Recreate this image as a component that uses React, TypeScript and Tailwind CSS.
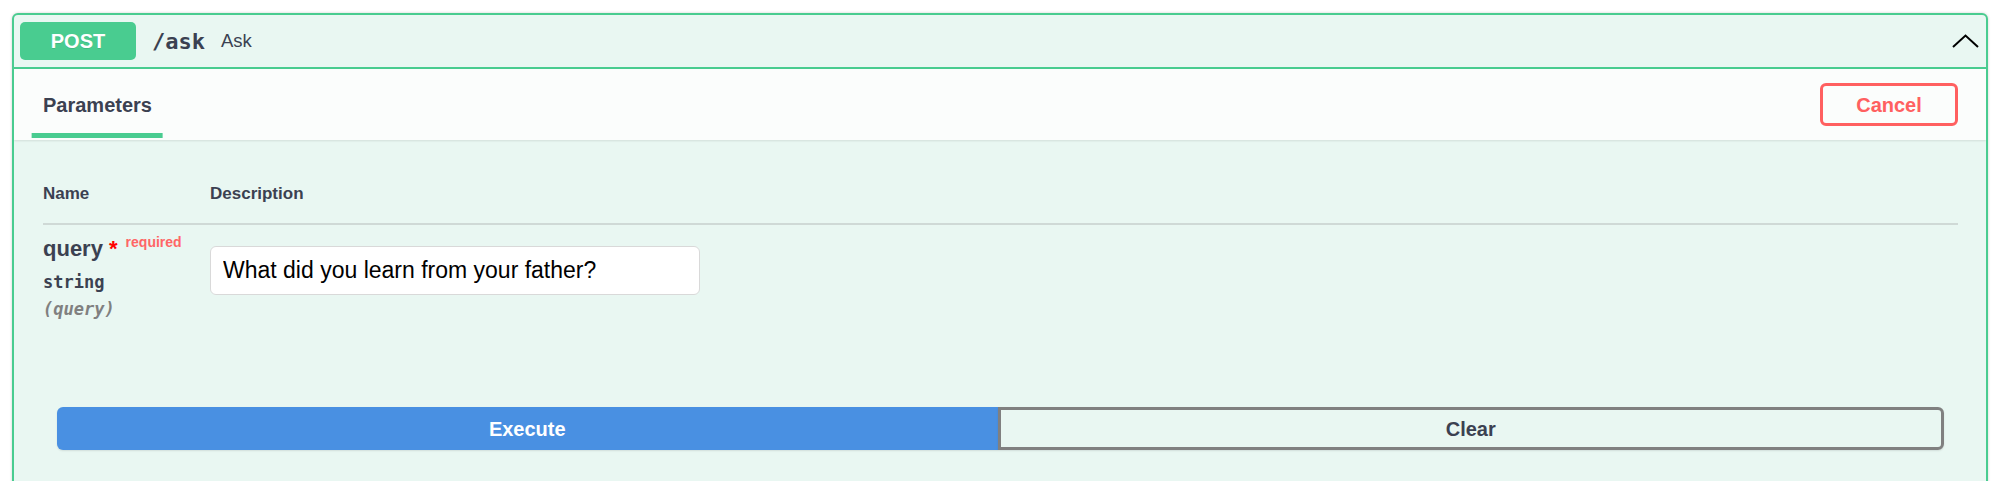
import React from "react";

const App: React.FC = () => {
    return (
        <div className="min-h-[481px] bg-white px-[12px] pt-[13px] font-['Liberation_Sans',Arial,sans-serif] text-[#3b4151]">
            <div className="overflow-hidden rounded-[6px] border-2 border-[#49cc90] bg-[#e9f7f2] shadow-[0_0_3px_rgba(0,0,0,0.19)]">
                {/* summary */}
                <div className="flex h-[54px] items-center border-b-2 border-[#49cc90] pl-[6px] pr-[7px]">
                    <span className="flex h-[38px] w-[116px] items-center justify-center rounded-[5px] bg-[#49cc90] text-[20px] font-bold text-white [text-shadow:0_1px_0_rgba(0,0,0,0.1)]">
                        POST
                    </span>
                    <span className="ml-[16px] font-['DejaVu_Sans_Mono',monospace] text-[22px] font-bold">/ask</span>
                    <span className="ml-[16px] text-[18.5px]">Ask</span>
                    <svg className="ml-auto" width="27" height="14" viewBox="0 0 27 14">
                        <polyline points="1,13 13.5,1.5 26,13" fill="none" stroke="#000" strokeWidth="2" />
                    </svg>
                </div>

                {/* section header */}
                <div className="relative flex h-[71px] items-center justify-between bg-white/80 pl-[29px] pr-[28px] shadow-[0_1px_2px_rgba(0,0,0,0.1)]">
                    <h4 className="relative text-[20px] font-bold leading-[28px]">
                        Parameters
                        <span className="absolute -bottom-[19px] left-1/2 h-[5px] w-[120%] -translate-x-1/2 bg-[#49cc90]" />
                    </h4>
                    <button className="h-[43px] w-[138px] rounded-[6px] border-[3px] border-[#ff6060] bg-transparent text-[20px] font-bold text-[#ff6060]">
                        Cancel
                    </button>
                </div>

                {/* parameters */}
                <div className="pl-[29px] pr-[28px] pt-[25px]">
                    <div className="flex border-b-2 border-[#cfd9d6] py-[17px] text-[17px] font-bold leading-[24px]">
                        <div className="w-[167px]">Name</div>
                        <div>Description</div>
                    </div>

                    <div className="flex">
                        <div className="w-[167px] pt-[9px]">
                            <div className="whitespace-nowrap text-[22px] font-bold leading-[30px]">
                                query
                                <span className="text-[#ff0000]">&nbsp;*</span>
                                <span className="relative -top-[9px] pl-[8px] text-[14px] text-[#ff6666]">required</span>
                            </div>
                            <div className="mt-[3px] font-['DejaVu_Sans_Mono',monospace] text-[17px] font-bold leading-[26px]">string</div>
                            <div className="mt-[1px] font-['DejaVu_Sans_Mono',monospace] text-[17px] font-bold italic leading-[26px] text-[#808080]">
                                (query)
                            </div>
                        </div>
                        <div className="pt-[21px]">
                            <input
                                type="text"
                                defaultValue="What did you learn from your father?"
                                className="h-[49px] w-[490px] rounded-[6px] border border-[#d9d9d9] bg-white px-[12px] text-[23px] text-black outline-none"
                            />
                        </div>
                    </div>

                    <div className="mt-[85px] flex px-[14px]">
                        <button className="h-[43px] flex-1 rounded-l-[6px] bg-[#4990e2] text-[20px] font-bold text-white shadow-[0_1px_2px_rgba(0,0,0,0.1)]">
                            Execute
                        </button>
                        <button className="h-[43px] flex-1 rounded-r-[6px] border-[3px] border-[#808080] bg-transparent text-[20px] font-bold text-[#3b4151] shadow-[0_1px_2px_rgba(0,0,0,0.1)]">
                            Clear
                        </button>
                    </div>
                    <div className="h-[40px]" />
                </div>
            </div>
        </div>
    );
};

export default App;
